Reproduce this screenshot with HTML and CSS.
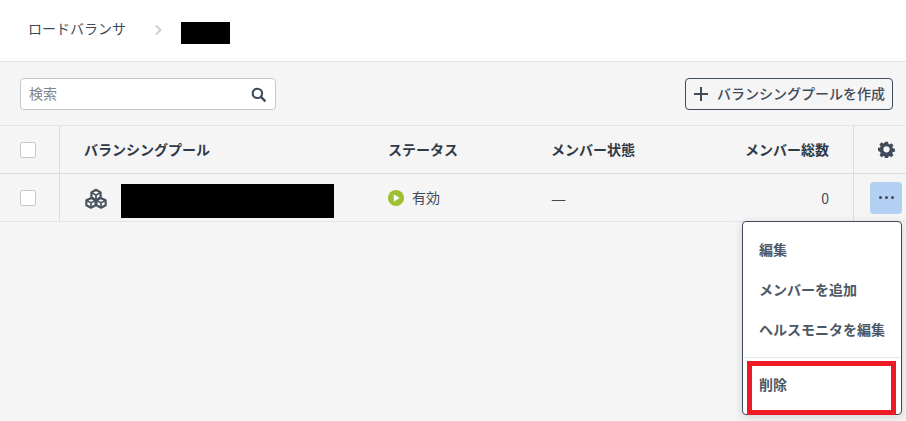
FILE: index.html
```html
<!DOCTYPE html>
<html lang="ja">
<head>
    <meta charset="UTF-8">
    <meta name="viewport" content="width=device-width, initial-scale=1.0">
    <title>ロードバランサ</title>
    <link rel="stylesheet" href="styles.css">
</head>
<body>
    <div class="breadcrumb">
        <span class="crumb">ロードバランサ</span>
        <svg class="crumb-sep" width="8" height="12" viewBox="0 0 8 12"><path d="M1 1.5 5.5 6 1 10.5" fill="none" stroke="#ccd0d4" stroke-width="2"/></svg>
        <div class="mask crumb-mask"></div>
    </div>

    <div class="toolbar">
        <div class="search">
            <span class="search-text">検索</span>
            <svg width="15" height="15" viewBox="0 0 16 16"><circle cx="6.8" cy="6.8" r="5" fill="none" stroke="#3f4b5a" stroke-width="2.2"/><path d="M10.6 10.6 14.6 14.6" stroke="#3f4b5a" stroke-width="2.6" stroke-linecap="round"/></svg>
        </div>
        <button class="btn-create">
            <svg width="14" height="14" viewBox="0 0 14 14"><path d="M7 0V14M0 7H14" stroke="#3f4b5a" stroke-width="2"/></svg>
            <span class="btn-label">バランシングプールを作成</span>
        </button>
    </div>

    <div class="table">
        <div class="row head">
            <div class="cell col-check"><span class="checkbox"></span></div>
            <div class="cell col-name">バランシングプール</div>
            <div class="cell col-status">ステータス</div>
            <div class="cell col-member">メンバー状態</div>
            <div class="cell col-total">メンバー総数</div>
            <div class="cell col-action">
                <svg class="gear" width="17" height="17" viewBox="0 0 18 18"><path fill="#3f4b5a" fill-rule="evenodd" d="M7.4 1h3.2l.4 2.2 1.3.6 1.9-1.3 2.2 2.2-1.3 1.9.6 1.3 2.2.4v3.2l-2.2.4-.6 1.3 1.3 1.9-2.2 2.2-1.9-1.3-1.3.6-.4 2.2H7.4l-.4-2.2-1.3-.6-1.9 1.3-2.2-2.2 1.3-1.9-.6-1.3L0 10.6V7.4l2.2-.4.6-1.3-1.3-1.9 2.2-2.2 1.9 1.3 1.3-.6zM9 5.7a3.3 3.3 0 1 0 0 6.6 3.3 3.3 0 0 0 0-6.6z" transform="translate(0 -.2)"/></svg>
            </div>
        </div>
        <div class="row body">
            <div class="cell col-check"><span class="checkbox"></span></div>
            <div class="cell col-name">
                <svg class="pool-icon" width="22" height="21" viewBox="0 0 24 22" fill="none" stroke="#47525f" stroke-width="2.4" stroke-linejoin="round"><path d="M12 1.5 17 4.3V10L12 12.8 7 10V4.3z"/><path d="M7 10.5 11.5 13V18.3L6.5 21 1.5 18.3V13z"/><path d="M17 10.5 22.5 13V18.3L17.5 21 12.5 18.3V13z"/><path d="M7 4.5 12 7.3 17 4.5M12 7.3V12M1.5 13 6.5 15.8 11.5 13M6.5 15.8V20.5M12.5 13 17.5 15.8 22.5 13M17.5 15.8V20.5" stroke-width="1.8"/></svg>
                <div class="mask name-mask"></div>
            </div>
            <div class="cell col-status">
                <svg width="16" height="16" viewBox="0 0 16 16"><circle cx="8" cy="8" r="8" fill="#9dc032"/><path d="M5.8 4.3 11.6 8 5.8 11.7z" fill="#fff"/></svg>
                <span class="status-text">有効</span>
            </div>
            <div class="cell col-member"><span class="dash">—</span></div>
            <div class="cell col-total">0</div>
            <div class="cell col-action">
                <div class="more"><span></span><span></span><span></span></div>
            </div>
        </div>
    </div>

    <div class="menu">
        <div class="menu-item">編集</div>
        <div class="menu-item">メンバーを追加</div>
        <div class="menu-item">ヘルスモニタを編集</div>
        <div class="menu-sep"></div>
        <div class="menu-item">削除</div>
        <div class="highlight"></div>
    </div>
</body>
</html>
```

FILE: styles.css
```css
* {
    margin: 0;
    padding: 0;
    box-sizing: border-box;
}

body {
    font-family: "Noto Sans CJK JP", "Noto Sans", sans-serif;
    font-size: 14px;
    color: #3f4b5a;
    background: #f5f5f5;
    height: 421px;
    overflow: hidden;
    position: relative;
}

.mask {
    background: #000;
}

.breadcrumb {
    height: 62px;
    background: #fff;
    border-bottom: 1px solid #e1e6ee;
    display: flex;
    align-items: center;
    padding-left: 28px;
}

.crumb {
    width: 127px;
    margin-bottom: 5px;
}

.crumb-sep {
    margin-bottom: 1px;
}

.crumb-mask {
    width: 49px;
    height: 22px;
    margin-left: 18px;
    margin-top: 5px;
}

.toolbar {
    height: 64px;
    display: flex;
    align-items: center;
    justify-content: space-between;
    padding: 1px 13px 0 20px;
    border-bottom: 1px solid #e1e6ee;
}

.search {
    width: 256px;
    height: 32px;
    background: #fff;
    border: 1px solid #c6c9cc;
    border-radius: 4px;
    display: flex;
    align-items: center;
    justify-content: space-between;
    padding: 0 9px 0 8px;
}

.search-text {
    color: #7d8690;
    margin-bottom: 2px;
}

.btn-create {
    width: 208px;
    height: 32px;
    font: inherit;
    font-weight: 500;
    color: #3f4b5a;
    background: transparent;
    border: 1px solid #3f4b5a;
    border-radius: 4px;
    display: flex;
    align-items: center;
    gap: 9px;
    padding-left: 8px;
    white-space: nowrap;
}

.btn-label {
    margin-bottom: 3px;
}

.row {
    display: flex;
    height: 48px;
}

.head {
    font-weight: 700;
    color: #2f3a47;
    border-bottom: 1px solid #dcdcdc;
}

.head .col-name,
.head .col-status,
.head .col-member,
.head .col-total {
    padding-bottom: 2px;
}

.body {
    border-bottom: 1px solid #e1e6ee;
}

.cell {
    display: flex;
    align-items: center;
}

.col-check {
    width: 60px;
    justify-content: center;
    border-right: 1px solid #dcdcdc;
    padding-right: 3px;
}

.checkbox {
    width: 16px;
    height: 16px;
    background: #fff;
    border: 1px solid #c6c9cc;
    border-radius: 2px;
}

.col-name {
    width: 304px;
    padding-left: 24px;
}

.pool-icon {
    flex-shrink: 0;
    margin-left: 1px;
    margin-top: 1px;
}

.name-mask {
    width: 213px;
    height: 34px;
    margin-left: 14px;
    margin-top: 6px;
}

.col-status {
    width: 187px;
    padding-left: 24px;
    gap: 8px;
}

.status-text {
    margin-bottom: 2px;
}

.col-member {
    width: 140px;
}

.dash {
    font-size: 17px;
}

.col-total {
    width: 138px;
    justify-content: flex-end;
}

.col-action {
    flex: 1;
    border-left: 1px solid #dcdcdc;
    margin-left: 24px;
    padding-left: 16px;
}

.gear {
    margin-left: 8px;
}

.more {
    width: 32px;
    height: 32px;
    background: #b3d0f3;
    border-radius: 4px;
    display: flex;
    align-items: center;
    justify-content: center;
    gap: 3px;
}

.more span {
    width: 3px;
    height: 3px;
    border-radius: 50%;
    background: #3f4b5a;
}

.menu {
    position: absolute;
    left: 742px;
    top: 221px;
    width: 160px;
    height: 194px;
    background: #fff;
    border: 1px solid #3f4b5a;
    border-radius: 4px;
    box-shadow: 0 2px 8px rgba(0, 0, 0, 0.15);
    padding-top: 7px;
    font-weight: 700;
    color: #4d5866;
}

.menu-item {
    height: 40px;
    padding-left: 16px;
    display: flex;
    align-items: center;
    white-space: nowrap;
}

.menu-sep {
    height: 1px;
    background: #e1e6f2;
    margin: 8px 0 6px;
}

.highlight {
    position: absolute;
    left: 4px;
    top: 139px;
    width: 149px;
    height: 54px;
    border: 5px solid #ed1c24;
}
```
